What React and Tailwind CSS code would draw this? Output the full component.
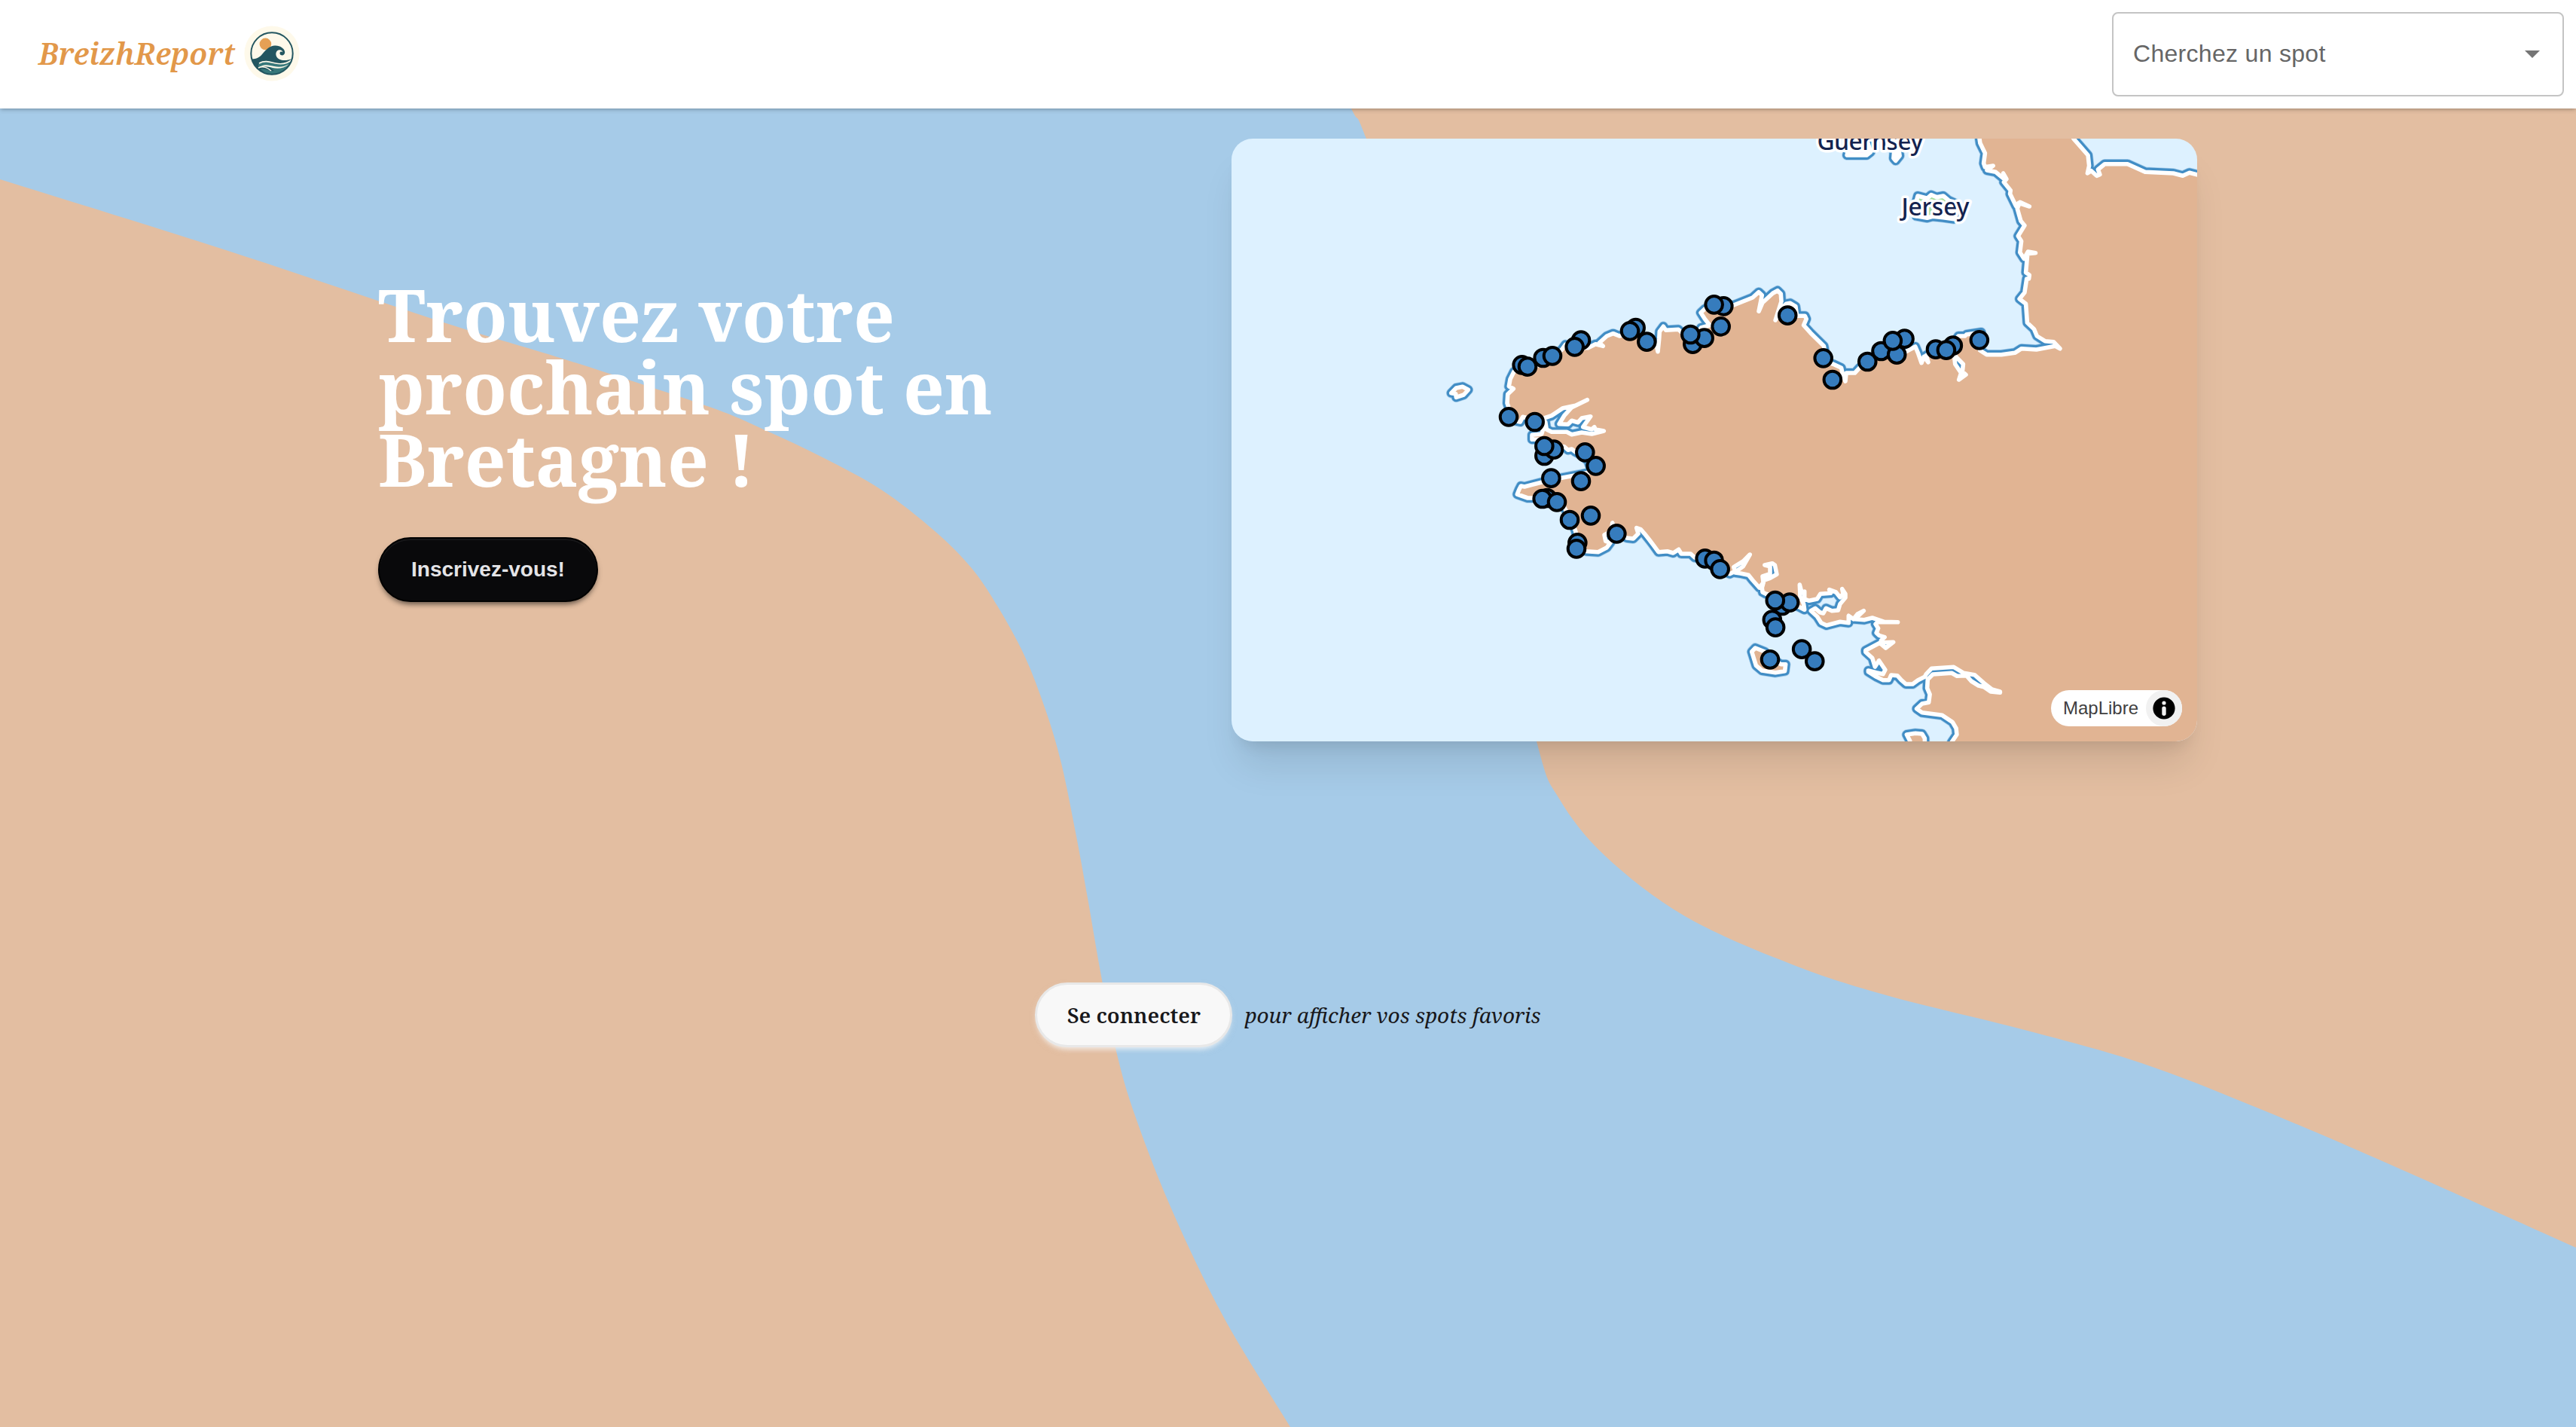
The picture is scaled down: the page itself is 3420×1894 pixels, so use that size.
const SERIF = "font-['Noto_Serif','DejaVu_Serif',serif]";
const SANS = "font-['Liberation_Sans',Arial,sans-serif]";

/* ---------- background ---------- */

const LEFT_BANK = [
  [-200, 176], [0, 238], [300, 332], [589, 428], [750, 477], [939, 539], [1014, 570], [1092, 607], [1170, 650],
  [1240, 704], [1289, 753], [1324, 804], [1360, 870], [1388, 942], [1409, 1013], [1428, 1105], [1444, 1192],
  [1461, 1290], [1481, 1391], [1506, 1478], [1555, 1604], [1625, 1749], [1713, 1894], [1790, 2020],
];

const RIGHT_BANK = [
  [1735, 20], [1794, 144], [1814, 184], [1900, 420], [1975, 700], [2040, 984], [2070, 1060], [2131, 1136],
  [2237, 1216], [2379, 1280], [2508, 1322], [2688, 1367], [2843, 1411], [2991, 1468], [3165, 1542],
  [3420, 1656], [3620, 1746],
];

function curve(points) {
  let d = `M${points[0].join(" ")}`;
  for (let i = 0; i < points.length - 1; i++) {
    const p0 = points[Math.max(i - 1, 0)];
    const p1 = points[i];
    const p2 = points[i + 1];
    const p3 = points[Math.min(i + 2, points.length - 1)];
    const c1 = [p1[0] + (p2[0] - p0[0]) / 6, p1[1] + (p2[1] - p0[1]) / 6];
    const c2 = [p2[0] - (p3[0] - p1[0]) / 6, p2[1] - (p3[1] - p1[1]) / 6];
    d += `C${c1.join(" ")} ${c2.join(" ")} ${p2.join(" ")}`;
  }
  return d;
}

function Background() {
  return (
    <svg className="absolute inset-0 h-full w-full" viewBox="0 0 3420 1894" preserveAspectRatio="none" aria-hidden="true">
      <rect width="3420" height="1894" fill="#a6cbe8" />
      <path d={`${curve(LEFT_BANK)}L-200 2020Z`} fill="#e3bea1" />
      <path d={`${curve(RIGHT_BANK)}L3620 20Z`} fill="#e3bea1" />
    </svg>
  );
}

/* ---------- map data: each sheet has its own origin and scale ---------- */

const sheet = (ox, oy, kx, ky) => (points) => points.map(([x, y]) => [ox + x / kx, oy + y / ky]);
const west = sheet(1900, 370, 3, 3);
const north = sheet(2200, 340, 2.8, 3);
const south = sheet(2200, 680, 2.8, 3);
const east = sheet(2380, 170, 2.8, 3);

const COAST = [
  ...south([
    [1085, 960], [1095, 915], [1114, 885], [1112, 860], [1098, 835], [1060, 808], [985, 797], [965, 782], [985, 762],
    [1010, 757], [1014, 725], [1004, 700], [1006, 665], [1025, 645], [1095, 640], [1115, 652], [1150, 650],
    [1168, 672], [1195, 690], [1215, 695], [1240, 714], [1275, 718], [1275, 714], [1245, 705], [1215, 680],
    [1180, 647], [1140, 640], [1103, 616], [1020, 622], [1000, 645], [995, 655], [970, 668], [950, 684],
    [925, 684], [908, 668], [893, 650], [870, 648], [862, 668], [840, 668], [815, 655], [785, 635], [785, 630],
    [815, 638], [840, 644], [848, 627], [825, 590], [810, 615], [800, 580], [775, 556], [775, 550], [828, 520],
    [850, 540], [878, 517], [843, 518], [833, 510], [846, 497], [825, 490], [815, 480], [822, 462], [812, 445],
    [820, 437], [895, 437], [845, 436], [800, 420], [770, 428], [735, 425], [768, 392], [745, 405], [730, 425],
    [712, 412], [712, 440], [680, 436], [630, 450], [610, 440], [595, 415], [572, 392], [588, 382], [605, 398],
    [618, 402], [628, 382], [650, 392], [673, 390], [680, 365], [700, 340], [700, 325], [688, 305], [692, 325],
    [680, 338], [665, 318], [640, 308], [645, 322], [607, 325], [595, 345], [565, 352], [548, 345], [548, 315],
    [538, 320], [530, 288], [532, 335], [545, 365], [548, 388], [530, 378], [490, 360], [440, 335], [405, 325],
    [392, 318], [390, 300], [398, 270], [420, 262], [445, 247], [438, 210], [428, 203], [400, 210], [420, 215],
    [420, 245], [392, 255], [395, 280], [380, 300], [355, 270], [340, 250], [310, 243], [290, 240], [300, 230],
    [320, 215], [345, 168], [320, 195], [285, 218], [290, 235], [270, 245], [235, 230], [180, 190], [140, 180],
    [125, 165], [90, 165], [80, 148], [60, 162], [38, 155], [5, 158],
  ]),
  ...west([
    [885, 1060], [870, 1040], [850, 1015], [835, 998], [818, 992], [825, 1015], [805, 1035], [780, 1032],
    [740, 1015], [722, 972], [718, 1005], [690, 1020], [695, 1045], [715, 1050], [700, 1070], [665, 1088],
    [620, 1085], [580, 1075], [583, 1040], [575, 1005], [560, 965], [530, 910], [500, 880], [445, 865],
    [415, 873], [385, 873], [343, 858], [350, 840], [358, 825], [372, 828], [480, 800], [520, 793], [600, 778],
    [640, 768], [625, 725], [595, 700], [575, 690], [560, 678], [545, 682], [530, 668], [500, 670], [450, 665],
    [430, 640], [402, 640], [402, 622], [440, 618], [455, 570], [460, 600], [480, 610], [540, 610], [560, 620],
    [600, 612], [640, 618], [688, 606], [655, 600], [650, 590], [640, 600], [605, 590], [635, 548], [600, 555],
    [585, 572], [560, 565], [545, 580], [510, 578], [530, 545], [560, 512], [622, 482], [575, 505], [525, 515],
    [480, 545], [450, 555], [413, 565], [385, 555], [365, 550], [355, 570], [310, 560], [308, 510], [303, 495],
    [305, 460], [328, 438], [310, 428], [315, 400], [330, 370], [385, 345], [430, 345], [480, 308], [520, 283],
    [535, 262], [570, 275], [625, 275], [655, 260], [685, 268], [670, 255], [700, 228], [725, 218], [750, 228],
    [790, 215], [860, 235], [898, 265], [903, 290], [908, 240], [910, 210], [925, 190], [935, 205], [985, 202],
    [1010, 225], [1060, 220], [1075, 195], [1110, 185], [1090, 160], [1074, 135], [1090, 120], [1127, 105], [1205, 105],
  ]),
  ...north([
    [355, 165], [378, 143], [390, 155], [378, 220], [392, 185], [430, 148], [448, 137], [460, 150], [462, 180],
    [440, 255], [465, 205], [480, 190], [495, 187], [515, 200], [520, 238], [550, 238], [555, 250], [545, 275],
    [570, 305], [620, 358], [625, 385], [618, 415], [655, 430], [685, 445], [690, 470], [700, 498], [703, 465],
    [735, 465], [752, 445], [782, 420], [833, 385], [875, 375], [925, 380], [960, 360], [970, 385], [983, 425],
    [992, 400], [1008, 422], [1000, 395], [1030, 380], [1080, 385], [1105, 400], [1108, 430], [1130, 465],
    [1122, 492], [1148, 472], [1135, 460], [1138, 430], [1110, 400], [1100, 350], [1120, 318], [1145, 318],
    [1150, 312], [1205, 303], [1200, 340], [1200, 375], [1225, 392], [1280, 392], [1330, 385], [1355, 368],
    [1410, 372], [1480, 358], [1498, 368],
  ]),
  ...east([
    [970, 851], [938, 848], [908, 828], [897, 800], [872, 775], [867, 700], [843, 680], [862, 655], [870, 600],
    [878, 600], [880, 585], [867, 575], [873, 500], [903, 497], [875, 492], [860, 520], [845, 495], [850, 450],
    [838, 430], [862, 388], [848, 370], [835, 320], [845, 295], [880, 312], [840, 298], [830, 310], [808, 262],
    [810, 248], [785, 215], [795, 203], [783, 180], [783, 200], [755, 175], [722, 168], [745, 150], [715, 155],
    [710, 140], [715, 100], [697, 60], [690, 10],
  ]),
];

const NORTH_EAST_COAST = east([
  [1020, 0], [1045, 43], [1098, 108], [1102, 150], [1096, 180], [1110, 170], [1130, 190], [1142, 185], [1135, 165],
  [1160, 143], [1245, 143], [1310, 175], [1415, 180], [1450, 190], [1475, 178], [1540, 195],
]);

const ISLANDS = [
  { land: "#e1b493", points: west([[80, 455], [100, 435], [125, 430], [148, 442], [130, 462], [100, 472], [98, 458]]) },
  {
    land: "#e1b493",
    points: south([
      [365, 540], [352, 555], [368, 610], [390, 630], [440, 638], [475, 632], [478, 605], [460, 605], [420, 580], [400, 555],
    ]),
  },
  { land: "#e1b493", points: south([[940, 950], [940, 910], [928, 885], [960, 880], [985, 882], [995, 900], [995, 950]]) },
  { land: "#fdf8ff", points: east([[205, 95], [202, 108], [275, 108], [290, 95], [280, 60], [210, 60]]) },
  { land: "#ffffff", points: east([[377, 95], [375, 120], [383, 130], [398, 110], [395, 90]]) },
  {
    land: "#a6dfa0",
    points: east([
      [460, 290], [465, 270], [500, 280], [515, 266], [535, 275], [560, 270], [580, 288], [600, 298], [600, 362],
      [560, 356], [520, 352], [500, 358], [460, 350],
    ]),
  },
];

const SPOTS = [
  ...west([
    [362, 343], [384, 350], [446, 315], [483, 307], [597, 245], [572, 271], [815, 195], [792, 208], [859, 251],
    [1042, 260], [1088, 236], [1033, 222], [1154, 190], [1165, 109], [1127, 103], [309, 550], [413, 570],
    [451, 705], [489, 680], [451, 666], [613, 691], [656, 745], [478, 794], [597, 806], [462, 873], [443, 876],
    [501, 889], [552, 960], [636, 943], [583, 1051], [579, 1075], [739, 1015], [1091, 1114], [1127, 1122],
    [1151, 1156],
  ]),
  ...north([
    [485, 236], [618, 406], [652, 492], [782, 420], [833, 378], [891, 392], [920, 329], [876, 337], [1036, 371],
    [1100, 356], [1075, 374], [1198, 334],
  ]),
  ...south([[465, 372], [493, 359], [439, 351], [428, 428], [440, 458], [420, 586], [538, 545], [586, 593]]),
];

const line = (points) => "M" + points.map(([x, y]) => `${x.toFixed(1)} ${y.toFixed(1)}`).join("L");

function CoastMap() {
  const coasts = [line(COAST), line(NORTH_EAST_COAST)];
  const islands = ISLANDS.map((island) => ({ land: island.land, d: `${line(island.points)}Z` }));
  const shore = [...coasts, ...islands.map((island) => island.d)].join("");
  const mainland = `${line([...COAST, ...NORTH_EAST_COAST])}L2960 1020L2580 1020Z`;

  return (
    <svg className="block h-full w-full" viewBox="1635 184 1282.5 800" role="img" aria-label="Carte des spots de Bretagne">
      <rect x="1635" y="184" width="1283" height="800" fill="#ddf1ff" />
      <g strokeLinejoin="round" strokeLinecap="round" fill="none">
        <path d={shore} stroke="#418dc5" strokeOpacity="0.35" strokeWidth="13.6" />
        <path d={shore} stroke="#418dc5" strokeWidth="12" />
        <path d={mainland} fill="#e1b493" />
        {islands.map((island) => (
          <path key={island.d} d={island.d} fill={island.land} />
        ))}
        <path d={shore} stroke="#ffffff" strokeWidth="5.6" />
      </g>
      <g
        className="font-['Noto_Sans',sans-serif] text-[32px] font-medium"
        fill="#14234f"
        stroke="#ffffff"
        strokeWidth="7"
        strokeLinejoin="round"
        paintOrder="stroke"
        textAnchor="middle"
      >
        <text x="2483" y="199" textLength="141">Guernsey</text>
        <text x="2569.5" y="286" textLength="90">Jersey</text>
      </g>
      <g fill="#367cbd" stroke="#000000" strokeWidth="4">
        {SPOTS.map(([x, y], i) => (
          <circle key={i} cx={x} cy={y} r="11.3" />
        ))}
      </g>
    </svg>
  );
}

function MapCredit() {
  return (
    <div className="absolute right-5 bottom-5 flex h-12 w-[174px] items-center justify-between rounded-full bg-white pl-4">
      <span className={`${SANS} text-2xl leading-none text-[#404040]`}>MapLibre</span>
      <span className="flex size-12 items-center justify-center rounded-full bg-[#f1f1f1]">
        <svg className="size-[30px]" viewBox="0 0 30 30" aria-hidden="true">
          <circle cx="15" cy="15" r="14.6" fill="#000" />
          <circle cx="15" cy="8" r="2.6" fill="#f1f1f1" />
          <rect x="12.3" y="12.4" width="5.4" height="12.6" rx="2.7" fill="#f1f1f1" />
        </svg>
      </span>
    </div>
  );
}

/* ---------- header ---------- */

function Logo() {
  return (
    <svg className="size-[74px]" viewBox="0 0 74 74" aria-hidden="true">
      <defs>
        <clipPath id="logo-disc">
          <circle cx="37" cy="37" r="27.6" />
        </clipPath>
      </defs>
      <circle cx="37" cy="37" r="36.6" fill="#fef9ea" />
      <circle cx="28.4" cy="24.4" r="7.8" fill="#e5a055" />
      <g clipPath="url(#logo-disc)">
        <path
          d="M6 44C14 45.500 20 43 24 38C30 31 34 27 41 26.500C48 26.200 53.800 30.500 54.200 35C54.300 38 52 40 49.500 39.300C47 38.500 46.800 35.300 49 34.600C50.300 34.300 51 35.200 51.400 35.800C51.400 33.500 49 31.600 46.200 32.300C42.500 33.500 41.300 37.500 43.200 41.300C46 46.500 55 48 66 43V70H6Z"
          fill="#235660"
        />
        <path d="M19 51C28 45 36 50 43 51C51 52 57 50.500 64 46V52C58 61 50 66 37 66C31 66 26 61 22 58C27 56 34 61 40 60C34 54 27 52 19 56Z" fill="#37787a" />
        <path d="M20 50C28 45.500 35 48.500 42 50C50 52 57 50.500 64 45" fill="none" stroke="#fef9ea" strokeWidth="1.600" />
        <path d="M18.500 56.500C26 49.500 34 53 40 54C47 55.500 54 54.500 60 51C53 57 45 57.500 38 56C32 54.500 26 53 18.500 56.500Z" fill="#fef9ea" />
        <path d="M19 56C26 53 31 56 36 60" fill="none" stroke="#fef9ea" strokeWidth="1.500" />
      </g>
      <circle cx="37" cy="37" r="27.700" fill="none" stroke="#235660" strokeWidth="2" />
    </svg>
  );
}

function Header() {
  return (
    <header className="relative z-10 flex h-36 items-center justify-between bg-white pr-4 pl-[51px] shadow-[0_2px_6px_rgba(0,0,0,0.18),0_2px_4px_-2px_rgba(0,0,0,0.18)]">
      <a className="flex items-center gap-2.5 pb-0.5">
        <span className={`${SERIF} w-[263px] text-[40px] leading-none font-semibold whitespace-nowrap text-[#e2984a] italic`}>
          BreizhReport
        </span>
        <Logo />
      </a>
      <div className="flex h-28 w-[600px] items-center justify-between rounded-lg border-2 border-[#c4c4c4] bg-white pr-2 pb-0.5 pl-[26px]">
        <span className={`${SANS} text-[32px] leading-none tracking-[0.00938em] text-[#666666]`}>Cherchez un spot</span>
        <svg className="mr-2 size-12" viewBox="0 0 24 24" fill="#757575" aria-hidden="true">
          <path d="M7 10l5 5 5-5z" />
        </svg>
      </div>
    </header>
  );
}

/* ---------- page ---------- */

export default function App() {
  return (
    <div className="relative h-[1894px] w-full overflow-hidden">
      <Background />
      <Header />
      <main className="relative flex flex-col pt-10">
        <section className="flex items-center justify-between pr-[503px] pl-[502px]">
          <div className="flex flex-col items-start gap-14">
            <h1 className={`${SERIF} text-8xl leading-none font-bold text-white`}>
              Trouvez votre
              <br />
              prochain spot en
              <br />
              Bretagne !
            </h1>
            <button
              className={`${SANS} h-[86px] w-[292px] rounded-full border-2 border-black bg-[#09090b] text-[28px] font-bold text-[#e4e4e7] shadow-[inset_0_2px_0_rgba(255,255,255,0.06),0_6px_6px_-3px_rgba(0,0,0,0.35),0_4px_8px_-2px_rgba(0,0,0,0.3)]`}
            >
              Inscrivez-vous!
            </button>
          </div>
          <div className="relative h-[800px] w-[1282.5px] overflow-hidden rounded-[28px] shadow-[0_40px_50px_-10px_rgba(0,0,0,0.1),0_16px_20px_-12px_rgba(0,0,0,0.1)]">
            <CoastMap />
            <MapCredit />
          </div>
        </section>
        <section className={`${SERIF} mt-80 flex items-center justify-center gap-4 text-[28px] text-[#18181b]`}>
          <button className="h-[86px] w-[262px] rounded-full border-[3px] border-[#e8e8e8] bg-[#f8f8f8] font-semibold shadow-[0_6px_6px_-4px_rgba(248,248,248,0.6),0_4px_8px_-2px_rgba(248,248,248,0.5)]">
            Se connecter
          </button>
          <p className="italic">pour afficher vos spots favoris</p>
        </section>
      </main>
    </div>
  );
}
